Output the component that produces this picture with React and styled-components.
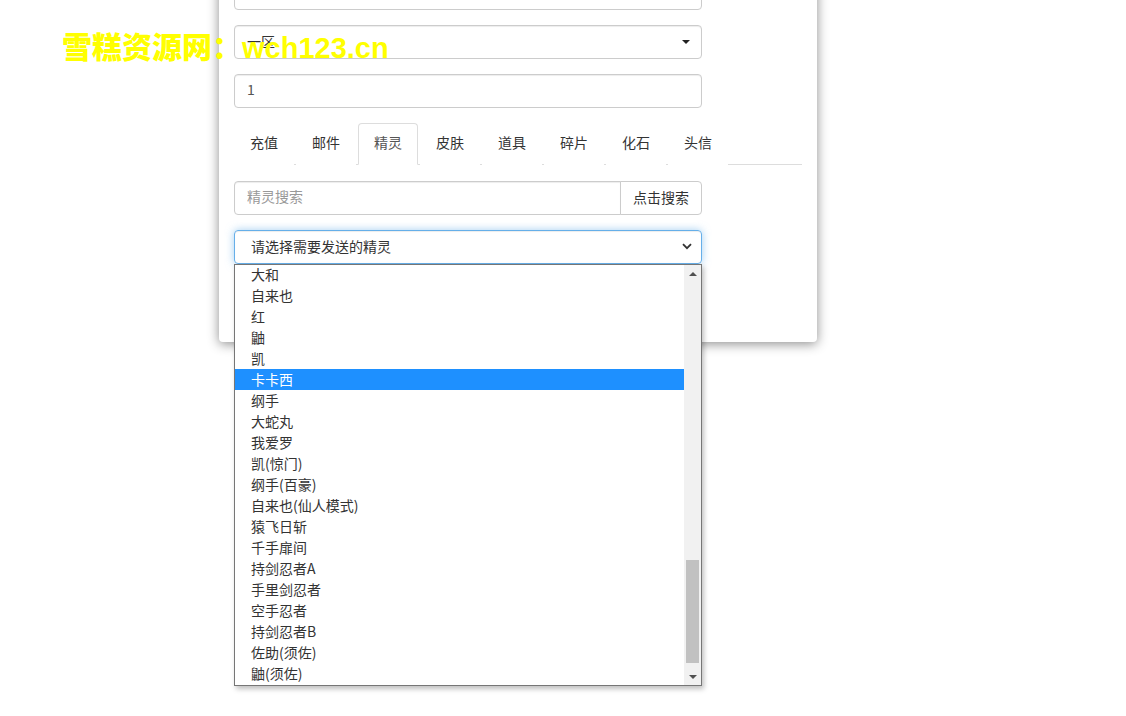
import React from "react";
import styled, { createGlobalStyle } from "styled-components";

const Global = createGlobalStyle`
  html, body { margin: 0; padding: 0; background: #fff; }
  body {
    font-family: "Noto Sans CJK SC", "Liberation Sans", sans-serif;
    font-size: 14px;
    color: #333;
    overflow: hidden;
  }
  * { box-sizing: border-box; }
`;

const Page = styled.div`
  position: relative;
  width: 1126px;
  height: 716px;
  overflow: hidden;
`;

const Watermark = styled.div`
  position: absolute;
  left: 62px;
  top: 33px;
  z-index: 10;
  font-family: "Liberation Sans", "Noto Sans CJK SC", sans-serif;
  font-weight: 900;
  font-size: 30px;
  line-height: 30px;
  color: #ffff00;
  white-space: nowrap;
  pointer-events: none;
`;

const WatermarkLatin = styled.span`
  font-size: 29px;
`;

const Card = styled.div`
  margin: -39px 0 0 219px;
  width: 598px;
  background: #fff;
  border-radius: 4px;
  box-shadow: 0 2px 12px rgba(0, 0, 0, 0.45);
  padding: 15px 15px 78px 15px;
  display: flex;
  flex-direction: column;
  gap: 15px;
`;

const TextInput = styled.input`
  display: block;
  width: 468px;
  height: 34px;
  padding: 4px 12px 8px 12px;
  font: inherit;
  font-size: 14px;
  color: #555;
  border: 1px solid #ccc;
  border-radius: 4px;
  box-shadow: inset 0 1px 1px rgba(0, 0, 0, 0.075);
  outline: none;
  &::placeholder { color: #999; }
`;

const SelectBox = styled.div`
  position: relative;
  width: 468px;
  height: 34px;
  padding: 0 12px 1px 12px;
  display: flex;
  align-items: center;
  justify-content: space-between;
  color: #555;
  border: 1px solid ${(p) => (p.$focus ? "#66afe9" : "#ccc")};
  border-radius: 4px;
  box-shadow: ${(p) =>
    p.$focus
      ? "inset 0 1px 1px rgba(0,0,0,.075), 0 0 8px rgba(102,175,233,.6)"
      : "inset 0 1px 1px rgba(0,0,0,.075)"};
`;

const SelectText = styled.span`
  color: #333;
  padding-left: ${(p) => p.$indent || 0}px;
  margin-bottom: 1px;
`;

const Caret = styled.span`
  width: 0;
  height: 0;
  margin-right: -1px;
  border-left: 4px solid transparent;
  border-right: 4px solid transparent;
  border-top: 4px solid #222;
`;

const Tabs = styled.ul`
  list-style: none;
  margin: 0;
  padding: 0;
  display: flex;
  border-bottom: 1px solid #ddd;
`;

const Tab = styled.li`
  margin-right: 2px;
  margin-bottom: -1px;
  padding: 8px 15px 12px 15px;
  line-height: 20px;
  color: ${(p) => (p.$active ? "#555" : "#333")};
  background: #fff;
  border: 1px solid ${(p) => (p.$active ? "#ddd" : "transparent")};
  border-bottom-color: ${(p) => (p.$active ? "#fff" : "transparent")};
  border-radius: 4px 4px 0 0;
`;

const TabPane = styled.div`
  display: flex;
  flex-direction: column;
  gap: 15px;
  padding-top: 1px;
`;

const InputGroup = styled.div`
  display: flex;
  width: 468px;
  height: 34px;
`;

const GroupInput = styled(TextInput)`
  flex: 1;
  width: auto;
  border-radius: 4px 0 0 4px;
`;

const GroupButton = styled.div`
  height: 34px;
  padding: 0 12px 3px 12px;
  display: flex;
  align-items: center;
  margin-left: -1px;
  border: 1px solid #ccc;
  border-radius: 0 4px 4px 0;
  background: #fff;
  color: #333;
`;

const SelectWrap = styled.div`
  position: relative;
  width: 468px;
`;

const OptionList = styled.div`
  position: absolute;
  left: 0;
  top: 34px;
  width: 468px;
  height: 422px;
  display: flex;
  background: #fff;
  border: 1px solid #767676;
  box-shadow: 2px 3px 5px rgba(0, 0, 0, 0.25);
  z-index: 5;
`;

const Options = styled.div`
  flex: 1;
  overflow: hidden;
`;

const OptionsInner = styled.div`
  margin-top: -1px;
`;

const Option = styled.div`
  height: 21px;
  line-height: 20px;
  padding-left: 16px;
  color: ${(p) => (p.$selected ? "#fff" : "#333")};
  background: ${(p) => (p.$selected ? "#1e90ff" : "transparent")};
  white-space: nowrap;
`;

const Scrollbar = styled.div`
  width: 17px;
  display: flex;
  flex-direction: column;
  background: #f1f1f1;
`;

const ScrollArrow = styled.div`
  height: 17px;
  display: flex;
  align-items: center;
  justify-content: center;
  &::before {
    content: "";
    width: 0;
    height: 0;
    border-left: 4px solid transparent;
    border-right: 4px solid transparent;
    ${(p) =>
      p.$down
        ? "border-top: 4px solid #505050;"
        : "border-bottom: 4px solid #505050;"}
  }
`;

const Track = styled.div`
  flex: 1;
  display: flex;
  flex-direction: column;
  justify-content: flex-end;
  padding: 0 2px 5px 2px;
`;

const Thumb = styled.div`
  height: 103px;
  background: #c1c1c1;
`;

const Chevron = () => (
  <svg width="10" height="7" viewBox="0 0 10 7" style={{ marginRight: -3 }}>
    <path d="M1 1.2 L5 5.2 L9 1.2" fill="none" stroke="#333" strokeWidth="1.8" />
  </svg>
);

const tabs = ["充值", "邮件", "精灵", "皮肤", "道具", "碎片", "化石", "头信"];

const spirits = [
  "大和",
  "自来也",
  "红",
  "鼬",
  "凯",
  "卡卡西",
  "纲手",
  "大蛇丸",
  "我爱罗",
  "凯(惊门)",
  "纲手(百豪)",
  "自来也(仙人模式)",
  "猿飞日斩",
  "千手扉间",
  "持剑忍者A",
  "手里剑忍者",
  "空手忍者",
  "持剑忍者B",
  "佐助(须佐)",
  "鼬(须佐)",
];

export default function App() {
  return (
    <Page>
      <Global />
      <Watermark>
        雪糕资源网：<WatermarkLatin>wch123.cn</WatermarkLatin>
      </Watermark>
      <Card>
        <TextInput readOnly />
        <SelectBox>
          <SelectText>一区</SelectText>
          <Caret />
        </SelectBox>
        <TextInput readOnly value="1" />
        <Tabs>
          {tabs.map((t) => (
            <Tab key={t} $active={t === "精灵"}>
              {t}
            </Tab>
          ))}
        </Tabs>
        <TabPane>
          <InputGroup>
            <GroupInput readOnly placeholder="精灵搜索" />
            <GroupButton>点击搜索</GroupButton>
          </InputGroup>
          <SelectWrap>
            <SelectBox $focus>
              <SelectText $indent={4}>请选择需要发送的精灵</SelectText>
              <Chevron />
            </SelectBox>
            <OptionList>
              <Options>
                <OptionsInner>
                  {spirits.map((s) => (
                    <Option key={s} $selected={s === "卡卡西"}>
                      {s}
                    </Option>
                  ))}
                </OptionsInner>
              </Options>
              <Scrollbar>
                <ScrollArrow />
                <Track>
                  <Thumb />
                </Track>
                <ScrollArrow $down />
              </Scrollbar>
            </OptionList>
          </SelectWrap>
        </TabPane>
      </Card>
    </Page>
  );
}
